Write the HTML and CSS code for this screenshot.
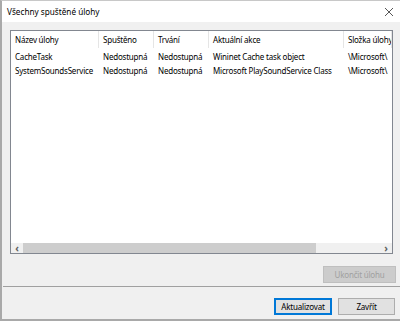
FILE: index.html
```html
<!DOCTYPE html>
<html>

<head>
    <meta charset="utf-8">
    <title>Všechny spuštěné úlohy</title>
    <link rel="stylesheet" href="styles.css">
</head>

<body>
    <div class="window">
        <div class="titlebar">
            <div class="title">Všechny spuštěné úlohy</div>
            <svg class="close" width="10" height="10" viewBox="0 0 10 10">
                <path d="M1 1 L9 9 M9 1 L1 9" stroke="#444" stroke-width="0.9" fill="none"/>
            </svg>
        </div>
        <div class="content">
            <div class="list">
                <div class="row header">
                    <div class="cell c1">Název úlohy</div>
                    <div class="cell c2">Spuštěno</div>
                    <div class="cell c3">Trvání</div>
                    <div class="cell c4">Aktuální akce</div>
                    <div class="cell c5">Složka úlohy</div>
                </div>
                <div class="row">
                    <div class="cell c1">CacheTask</div>
                    <div class="cell c2">Nedostupná</div>
                    <div class="cell c3">Nedostupná</div>
                    <div class="cell c4">Wininet Cache task object</div>
                    <div class="cell c5">\Microsoft\</div>
                </div>
                <div class="row">
                    <div class="cell c1">SystemSoundsService</div>
                    <div class="cell c2">Nedostupná</div>
                    <div class="cell c3">Nedostupná</div>
                    <div class="cell c4">Microsoft PlaySoundService Class</div>
                    <div class="cell c5">\Microsoft\</div>
                </div>
                <div class="spacer"></div>
                <div class="scrollbar">
                    <div class="arrow">&lsaquo;</div>
                    <div class="thumb"></div>
                    <div class="track"></div>
                    <div class="arrow">&rsaquo;</div>
                </div>
            </div>
            <div class="actions">
                <button class="btn disabled">Ukončit úlohu</button>
            </div>
            <div class="separator"></div>
            <div class="footer">
                <button class="btn default">Aktualizovat</button>
                <button class="btn">Zavřít</button>
            </div>
        </div>
    </div>
</body>
</html>
```

FILE: styles.css
```css
body {
    margin: 0;
    font-family: "Noto Sans", sans-serif;
    font-size: 8px;
    letter-spacing: -0.2px;
    color: #000;
    background: #f0f0f0;
}

.window {
    width: 400px;
    height: 321px;
    box-sizing: border-box;
    border-left: 2px solid #a9a9a9;
    border-bottom: 2px solid #a9a9a9;
    border-top: 1px solid #c8c8c8;
    display: flex;
    flex-direction: column;
    overflow: hidden;
}

.titlebar {
    height: 21px;
    background: #fff;
    display: flex;
    align-items: center;
    justify-content: space-between;
    padding: 0 6px 0 5px;
    flex-shrink: 0;
}

.title {
    font-size: 8.2px;
    letter-spacing: 0;
}

.content {
    flex: 1;
    display: flex;
    flex-direction: column;
    background: #f0f0f0;
}

.list {
    margin: 8px 7px 0 8px;
    height: 224px;
    box-sizing: border-box;
    border: 1px solid #828790;
    background: #fff;
    display: flex;
    flex-direction: column;
    overflow: hidden;
}

.row {
    display: flex;
    height: 14px;
    align-items: center;
    white-space: nowrap;
}

.row.header {
    height: 17px;
    margin-bottom: 1px;
}

.cell {
    box-sizing: border-box;
    padding-left: 4px;
    overflow: hidden;
    flex-shrink: 0;
}

.header .cell {
    height: 17px;
    line-height: 17px;
    border-right: 1px solid #e5e5e5;
}

.c1 { width: 88px; }
.c2 { width: 55px; }
.c3 { width: 55px; }
.c4 { width: 135px; }
.c5 { flex: 1; border-right: none; }

.spacer {
    flex: 1;
}

.scrollbar {
    height: 10px;
    display: flex;
    background: #f0f0f0;
}

.arrow {
    width: 12px;
    line-height: 10px;
    text-align: center;
    font-size: 10px;
    font-weight: bold;
    color: #606060;
}

.thumb {
    width: 293px;
    background: #cdcdcd;
}

.track {
    flex: 1;
}

.actions {
    display: flex;
    justify-content: flex-end;
    padding: 12px 4px 0 0;
}

.separator {
    margin: 3px 0 0 1px;
    border-top: 1px solid #a0a0a0;
}

.footer {
    display: flex;
    justify-content: flex-end;
    gap: 6px;
    padding: 11px 5px 0 0;
}

.btn {
    height: 17px;
    box-sizing: border-box;
    padding: 0;
    font-family: "Noto Sans", sans-serif;
    font-size: 8px;
    letter-spacing: -0.2px;
    background: #e1e1e1;
    border: 1px solid #adadad;
    color: #000;
    width: 57px;
}

.btn.default {
    border: 1px solid #0078d7;
    box-shadow: inset 0 0 0 1px #0078d7;
    width: 58px;
}

.btn.disabled {
    width: 73px;
    background: #cccccc;
    border-color: #bfbfbf;
    color: #a0a0a0;
}
```
